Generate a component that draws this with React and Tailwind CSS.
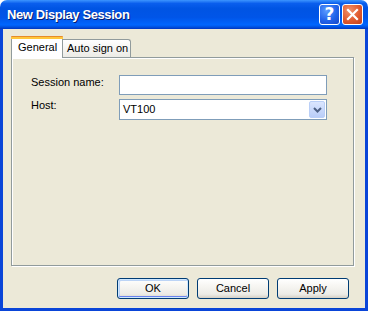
import React from "react";

const font = { fontFamily: '"Liberation Sans", Arial, sans-serif' };

function XPButton({ children, isDefault }) {
  return (
    <button
      className="w-[72px] h-[21px] rounded-[3px] border border-[#003c74] text-[11px] font-normal text-black flex items-center justify-center bg-[linear-gradient(to_bottom,#ffffff_0%,#f6f5f1_40%,#ecebe6_80%,#d6d0c5_100%)]"
      style={
        isDefault
          ? { ...font, boxShadow: "inset 0 0 0 1px #cee7ff, inset 0 -1px 0 1px #6982ee, inset 1px 1px 0 1px #bcd4f6" }
          : font
      }
    >
      {children}
    </button>
  );
}

export default function App() {
  return (
    <div className="w-[368px] h-[311px] flex flex-col overflow-hidden select-none" style={font}>
      {/* Title bar */}
      <div className="h-[29px] shrink-0 rounded-t-[7px] flex items-center pl-[7px] pr-[5px] bg-[linear-gradient(to_bottom,#3d95ff_0%,#0a5eed_12%,#0054e3_30%,#0055e8_60%,#0066ff_86%,#0052e0_93%,#0035c0_100%)]">
        <div className="flex-1 text-white font-bold text-[13px] tracking-[-0.4px] [text-shadow:1px_1px_0_#0a1e6e]">
          New Display Session
        </div>
        <div className="flex gap-[2px] items-center">
          <div className="w-[21px] h-[21px] rounded-[3px] border border-white flex items-center justify-center bg-[radial-gradient(circle_at_35%_30%,#5a9cff_0%,#2263ea_55%,#1546c8_100%)]">
            <span className="text-white font-bold text-[17px] leading-none" style={{ fontFamily: '"DejaVu Sans", sans-serif' }}>?</span>
          </div>
          <div className="w-[21px] h-[21px] rounded-[3px] border border-white flex items-center justify-center bg-[radial-gradient(circle_at_35%_30%,#f2926c_0%,#e05a2e_55%,#c2401c_100%)]">
            <svg width="13" height="13" viewBox="0 0 13 13">
              <path d="M2 2 L11 11 M11 2 L2 11" stroke="white" strokeWidth="2.2" strokeLinecap="square" />
            </svg>
          </div>
        </div>
      </div>

      {/* Body with frame */}
      <div className="flex-1 flex flex-col bg-[#ece9d8] border-x-[3px] border-b-[3px] border-[#0a45d8]">
        <div className="flex-1 flex flex-col pl-[8px] pr-[11px] pt-[7px]">
          {/* Tabs */}
          <div className="flex items-end h-[22px] relative z-10">
            <div className="h-[22px] w-[52px] bg-white border-x border-[#919b9c] rounded-t-[3px] flex flex-col relative">
              <div className="h-[1px] bg-[#e68b2c] -mx-px rounded-t-[3px]" />
              <div className="h-[2px] bg-[#ffc73c] -mx-px" />
              <div className="text-[11px] text-black pl-[6px] pt-[2px] leading-[13px]">General</div>
            </div>
            <div className="h-[18px] w-[68px] border-t border-r border-[#919b9c] rounded-tr-[3px] mb-[1px] bg-[linear-gradient(to_bottom,#ffffff,#ecebe6)] text-[11px] text-black pl-[4px] pt-[2px] leading-[13px]">
              Auto sign on
            </div>
          </div>
          {/* Panel */}
          <div className="h-[209px] -mt-[1px] border border-[#919b9c] bg-[#ece9d8] shadow-[inset_1px_1px_0_#ffffff,1px_1px_0_#ffffff] pl-[19px] pr-[26px] pt-[17px]">
            <div className="grid grid-cols-[88px_1fr] gap-y-[4px] text-[11px] text-black">
              <div className="pt-[1px] leading-[13px]">Session name:</div>
              <div className="h-[20px] border border-[#7f9db9] bg-white" />
              <div className="pt-[0px] leading-[13px]">Host:</div>
              <div className="h-[21px] border border-[#7f9db9] bg-white flex items-center pl-[3px] pr-[1px]">
                <span className="flex-1 leading-none">VT100</span>
                <div className="w-[16px] h-[17px] rounded-[2px] border border-[#bacff7] flex items-center justify-center bg-[linear-gradient(to_bottom,#dbe6fe,#b9cdf8)]">
                  <svg width="9" height="6" viewBox="0 0 9 6">
                    <path d="M1 1 L4.5 4.5 L8 1" stroke="#4d6185" strokeWidth="2" fill="none" />
                  </svg>
                </div>
              </div>
            </div>
          </div>
          {/* Buttons */}
          <div className="flex justify-end gap-[8px] pt-[12px] pr-[5px]">
            <XPButton isDefault>OK</XPButton>
            <XPButton>Cancel</XPButton>
            <XPButton>Apply</XPButton>
          </div>
        </div>
      </div>
    </div>
  );
}
